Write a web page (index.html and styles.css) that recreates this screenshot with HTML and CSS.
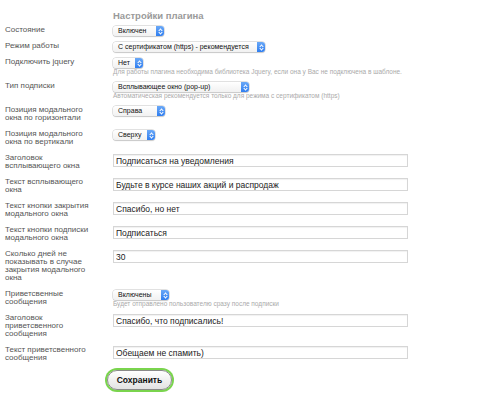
FILE: index.html
```html
<!DOCTYPE html>
<html lang="ru">
<head>
    <meta charset="UTF-8">
    <title>Настройки плагина</title>
    <link rel="stylesheet" href="styles.css">
</head>
<body>

    <form class="settings">
        <div class="label head"></div>
        <div class="field head"><h1>Настройки плагина</h1></div>

        <div class="label">Состояние</div>
        <div class="field">
            <div class="select w-state"><span>Включен</span><i class="stepper"></i></div>
        </div>

        <div class="label">Режим работы</div>
        <div class="field">
            <div class="select w-mode"><span>С сертификатом (https) - рекомендуется</span><i class="stepper"></i></div>
        </div>

        <div class="label">Подключить jquery</div>
        <div class="field">
            <div class="select w-jquery"><span>Нет</span><i class="stepper"></i></div>
            <div class="hint">Для работы плагина необходима библиотека Jquery, если она у Вас не подключена в шаблоне.</div>
        </div>

        <div class="label">Тип подписки</div>
        <div class="field">
            <div class="select w-type"><span>Всплывающее окно (pop-up)</span><i class="stepper"></i></div>
            <div class="hint">Автоматическая рекомендуется только для режима с сертификатом (https)</div>
        </div>

        <div class="label">Позиция модального окна по горизонтали</div>
        <div class="field">
            <div class="select w-horiz"><span>Справа</span><i class="stepper"></i></div>
        </div>

        <div class="label">Позиция модального окна по вертикали</div>
        <div class="field">
            <div class="select w-vert"><span>Сверху</span><i class="stepper"></i></div>
        </div>

        <div class="label">Заголовок всплывающего окна</div>
        <div class="field"><input class="text" type="text" value="Подписаться на уведомления"></div>

        <div class="label">Текст всплывающего окна</div>
        <div class="field"><input class="text" type="text" value="Будьте в курсе наших акций и распродаж"></div>

        <div class="label">Текст кнопки закрытия модального окна</div>
        <div class="field"><input class="text" type="text" value="Спасибо, но нет"></div>

        <div class="label">Текст кнопки подписки модального окна</div>
        <div class="field"><input class="text" type="text" value="Подписаться"></div>

        <div class="label">Сколько дней не показывать в случае закрытия модального окна</div>
        <div class="field"><input class="text" type="text" value="30"></div>

        <div class="label">Приветсвенные сообщения</div>
        <div class="field">
            <div class="select w-welcome"><span>Включены</span><i class="stepper"></i></div>
            <div class="hint">Будет отправлено пользователю сразу после подписки</div>
        </div>

        <div class="label">Заголовок приветсвенного сообщения</div>
        <div class="field"><input class="text" type="text" value="Спасибо, что подписались!"></div>

        <div class="label">Текст приветсвенного сообщения</div>
        <div class="field"><input class="text" type="text" value="Обещаем не спамить)"></div>

        <div class="label"></div>
        <div class="field">
            <button type="button" class="save">Сохранить</button>
        </div>
    </form>

</body>
</html>
```

FILE: styles.css
```css
body {
    margin: 0;
    padding: 10px 5px 0;
    font-family: "Liberation Sans", Arial, sans-serif;
    background: #fff;
}
.settings {
    display: grid;
    grid-template-columns: 108px 295px;
}
h1 {
    margin: 0;
    font-size: 9.5px;
    line-height: 12px;
    font-weight: bold;
    color: #9a9a9a;
}
.label {
    width: 92px;
    padding-bottom: 8px;
    font-size: 8px;
    line-height: 8px;
    color: #555;
}
.field {
    padding-bottom: 6px;
}
.label.head,
.field.head {
    padding-bottom: 4px;
}
.select {
    position: relative;
    height: 10px;
    box-sizing: border-box;
    padding-left: 5px;
    border-radius: 3px;
    background: linear-gradient(#fff, #f1f1f1);
    box-shadow: 0 0 0 0.5px #c8c8c8, 0 0.5px 1px rgba(0, 0, 0, 0.2);
    font-size: 7px;
    line-height: 10px;
    color: #111;
    white-space: nowrap;
}
.stepper {
    position: absolute;
    top: 0;
    right: 0;
    width: 8px;
    height: 10px;
    border-radius: 0 3px 3px 0;
    background: linear-gradient(#6aa8f7, #2f7ef0);
}
.stepper::before,
.stepper::after {
    content: "";
    position: absolute;
    left: 2.5px;
    width: 2px;
    height: 2px;
    border-left: 1px solid #fff;
    border-top: 1px solid #fff;
}
.stepper::before {
    top: 2.5px;
    transform: rotate(45deg);
}
.stepper::after {
    top: 4.5px;
    transform: rotate(225deg);
}
.w-state { width: 51px; }
.w-mode { width: 152px; }
.w-jquery { width: 30px; }
.w-type { width: 136px; }
.w-horiz { width: 52px; }
.w-vert { width: 42px; }
.w-welcome { width: 56px; }
.hint {
    font-size: 6.5px;
    line-height: 8px;
    color: #aaa;
    white-space: nowrap;
}
.text {
    display: block;
    box-sizing: border-box;
    width: 295px;
    height: 13px;
    margin: 0;
    padding: 0 2px;
    border: 1px solid #d6d6d6;
    box-shadow: inset 0 1px 1px rgba(0, 0, 0, 0.06);
    font-family: "Liberation Sans", Arial, sans-serif;
    font-size: 8.5px;
    color: #222;
    outline: none;
}
.save {
    display: block;
    width: 65px;
    height: 20px;
    margin-left: -6px;
    padding: 0;
    border: 1px solid #8a8a8a;
    border-radius: 10px;
    background: linear-gradient(#fff, #e2e2e2);
    box-shadow: 0 0 0 2px #7ad44e;
    font-family: "Liberation Sans", Arial, sans-serif;
    font-size: 8.5px;
    font-weight: bold;
    color: #111;
}
```
